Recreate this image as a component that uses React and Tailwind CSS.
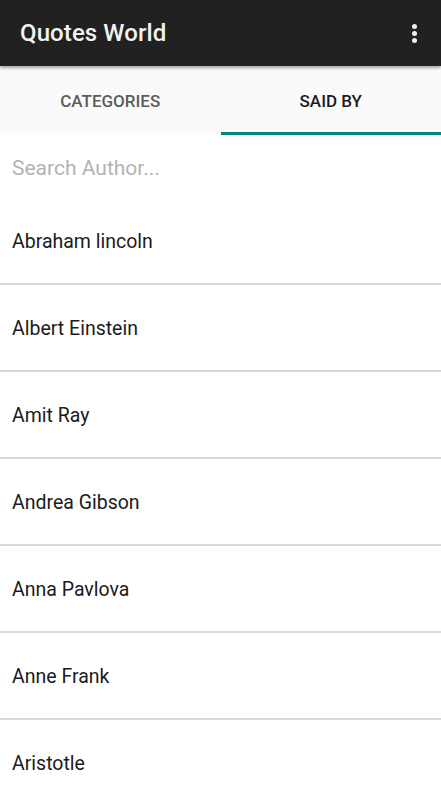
import React from 'react';

const authors = [
  'Abraham lincoln',
  'Albert Einstein',
  'Amit Ray',
  'Andrea Gibson',
  'Anna Pavlova',
  'Anne Frank',
  'Aristotle',
];

export default function App() {
  return (
    <div className="h-[800px] overflow-hidden bg-white font-['Roboto',sans-serif]">
      {/* toolbar */}
      <div className="relative z-10 h-[66px] bg-[#212121] flex items-center justify-between pl-5 pr-3 shadow-[0_2px_3px_rgba(0,0,0,0.35)]">
        <h1 className="text-[24px] font-medium text-[#f2f2f2] tracking-[0.1px]">Quotes World</h1>
        <button className="flex flex-col items-center gap-[2px] px-3 py-2">
          <span className="w-[5px] h-[5px] rounded-full bg-[#eeeeee]" />
          <span className="w-[5px] h-[5px] rounded-full bg-[#eeeeee]" />
          <span className="w-[5px] h-[5px] rounded-full bg-[#eeeeee]" />
        </button>
      </div>

      {/* tabs */}
      <div className="flex h-[69px] bg-[#fafafa]">
        <div className="flex-1 flex items-center justify-center text-[17px] font-medium text-[#5c5c5c] pt-[3px]">
          CATEGORIES
        </div>
        <div className="flex-1 flex items-center justify-center text-[17px] font-medium text-[#1a1a1a] border-b-[3px] border-[#00897b] pt-[6px]">
          SAID BY
        </div>
      </div>

      {/* search */}
      <input
        className="w-full h-[64px] px-3 pt-[2px] text-[21px] text-[#222] placeholder:text-[#b3b3b3] outline-none"
        placeholder="Search Author..."
      />

      {/* list */}
      <ul className="-mt-px">
        {authors.map((name) => (
          <li
            key={name}
            className="h-[87px] flex items-center px-3 pt-[2px] text-[19.5px] text-[#1b1b1b] border-b-2 border-[#d9d9d9]"
          >
            {name}
          </li>
        ))}
      </ul>
    </div>
  );
}
